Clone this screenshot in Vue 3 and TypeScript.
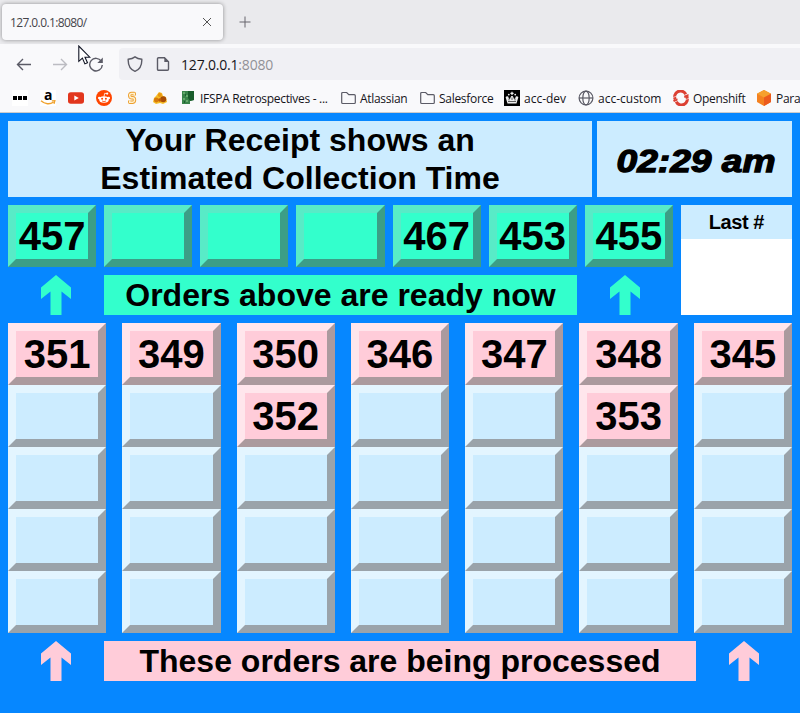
<script setup lang="ts">
interface Bookmark {
  icon: string
  label?: string
  loose?: boolean
}

const bookmarks: Bookmark[] = [
  { icon: 'dots' },
  { icon: 'amazon' },
  { icon: 'youtube' },
  { icon: 'reddit' },
  { icon: 'script' },
  { icon: 'cluster' },
  { icon: 'retro', label: 'IFSPA Retrospectives - ...' },
  { icon: 'folder', label: 'Atlassian' },
  { icon: 'folder', label: 'Salesforce' },
  { icon: 'crown', label: 'acc-dev', loose: true },
  { icon: 'globe', label: 'acc-custom', loose: true },
  { icon: 'openshift', label: 'Openshift' },
  { icon: 'cube', label: 'Para' },
]

const ready: string[] = ['457', '', '', '', '467', '453', '455']

const processing: string[][] = [
  ['351', '349', '350', '346', '347', '348', '345'],
  ['', '', '352', '', '', '353', ''],
  ['', '', '', '', '', '', ''],
  ['', '', '', '', '', '', ''],
  ['', '', '', '', '', '', ''],
]
</script>

<template>
  <div class="window">
    <header class="browser">
      <div class="tabs">
        <div class="tab">
          <span class="tab-title">127.0.0.1:8080/</span>
          <svg class="tab-close" viewBox="0 0 10 10"><path d="M1 1l8 8M9 1l-8 8" /></svg>
        </div>
        <svg class="new-tab" viewBox="0 0 12 12"><path d="M6 .5v11M.5 6h11" /></svg>
      </div>

      <div class="toolbar">
        <svg class="nav" viewBox="0 0 16 16"><path d="M15 8.500H1.500M7 3L1.500 8.500 7 14" /></svg>
        <svg class="nav disabled" viewBox="0 0 16 16"><path d="M1 8.500h13.500M9 3l5.500 5.500L9 14" /></svg>
        <svg class="nav" viewBox="0 0 16 16"><path d="M13.300 5.200A6.300 6.300 0 1 0 14.300 9" /><path d="M14.800 1.500v5.500H9.300z" class="solid" /></svg>
        <div class="address">
          <svg class="shield" viewBox="0 0 16 16"><path d="M8 .9C9.800 2.300 12 3 14.800 3.300 15 8.500 13 13.300 8 15.300 3 13.300 1 8.500 1.200 3.300 4 3 6.200 2.300 8 .9z" /></svg>
          <svg class="page" viewBox="0 0 14 16"><path d="M2.500 1.700h6l4 4v7.600a1 1 0 0 1-1 1h-9a1 1 0 0 1-1-1V2.700a1 1 0 0 1 1-1z" /><path d="M8.300 1.500v4.400h4.400z" class="solid" /></svg>
          <span class="url">127.0.0.1<span class="port">:8080</span></span>
        </div>
      </div>

      <nav class="bookmarks">
        <div v-for="(b, i) in bookmarks" :key="i" class="bookmark" :class="{ loose: b.loose }">
          <svg class="icon" viewBox="0 0 16 16">
            <template v-if="b.icon === 'dots'">
              <path fill="#fff" d="M0 0h16v16H0z" />
              <path fill="#000" d="M1 6h4v4H1zM6 6h4v4H6zM11 6h4v4h-4z" />
            </template>
            <template v-else-if="b.icon === 'amazon'">
              <path fill="#fff" d="M0 0h16v16H0z" />
              <text x="8" y="9.500" text-anchor="middle" class="logo-a">a</text>
              <path d="M1 10.800c4 3.600 9 3.700 12.300 1.400M11.800 10.900l3-.2-.8 3" fill="none" stroke="#f0a12b" stroke-width="1.400" />
            </template>
            <template v-else-if="b.icon === 'youtube'">
              <rect y="2.300" width="16" height="11.500" rx="2.800" fill="#e2361d" />
              <path d="M6.300 5.500v5l4.500-2.500z" fill="#fff" />
            </template>
            <template v-else-if="b.icon === 'reddit'">
              <circle cx="8" cy="8" r="8" fill="#ff4500" />
              <ellipse cx="8" cy="9.500" rx="4.800" ry="3.300" fill="#fff" />
              <circle cx="3.300" cy="8" r="1.300" fill="#fff" />
              <circle cx="12.700" cy="8" r="1.300" fill="#fff" />
              <circle cx="11.200" cy="3.600" r="1.100" fill="#fff" />
              <path d="M8 6.500l.7-3.200 2.500.4" fill="none" stroke="#fff" stroke-width=".8" />
              <circle cx="6.100" cy="8.800" r="1" fill="#ff4500" />
              <circle cx="9.900" cy="8.800" r="1" fill="#ff4500" />
              <path d="M6 11q2 1.200 4 0" fill="none" stroke="#ff4500" stroke-width=".8" />
            </template>
            <template v-else-if="b.icon === 'script'">
              <path d="M10.300 5.500V3.500H7.500Q5.700 3.500 5.700 5.500t1.800 2.300h1.200q1.800 0 1.800 2.100t-1.800 2.400H5.700V10.500" fill="none" stroke="#eda02f" stroke-width="3.400" stroke-linejoin="round" />
              <path d="M10.300 5.500V3.500H7.500Q5.700 3.500 5.700 5.500t1.800 2.300h1.200q1.800 0 1.800 2.100t-1.800 2.400H5.700V10.500" fill="none" stroke="#fff0cf" stroke-width="1.500" />
            </template>
            <template v-else-if="b.icon === 'cluster'">
              <path d="M4 6l3-4 3 1 1 3 3 1 1 5-4 2-3-1-4 1-3-2 1-4z" fill="#f6bd27" />
              <circle cx="7.800" cy="5" r="2" fill="#e9960f" />
              <circle cx="4.300" cy="10" r="2.400" fill="#d77a0b" />
              <circle cx="11.200" cy="9.300" r="3" fill="#a84c06" />
              <circle cx="7.800" cy="10" r="1.700" fill="#c45c08" />
            </template>
            <template v-else-if="b.icon === 'retro'">
              <path d="M2 1h12v9l-4 1v3H2z" fill="#39834a" />
              <path d="M8 1h6v9l-4 1-2-3z" fill="#195c2b" />
              <path d="M3 2h2v2H3zM6 5h2v2H6zM3 8h2v2H3zM6 10h2v2H6z" fill="#65a96b" />
              <path d="M5 4h1v2H5zM4 11h1v2H4z" fill="#1b602f" />
            </template>
            <path v-else-if="b.icon === 'folder'" d="M1.700 4.200v8.300q0 1 1 1h11.600q1 0 1-1V5.700q0-1-1-1H8.800L6.700 2.500h-4q-1 0-1 1z" class="line" />
            <template v-else-if="b.icon === 'crown'">
              <path fill="#000" d="M0 0h16v16H0z" />
              <path fill="#eee" d="M3.500 13.500L2 8.500Q1 6.500 3 6.200q2 .1 1.500 2L6 9l.6-1.800Q7 5.700 8 5.700t1.400 1.500L10 9l1.500-.8q-.5-1.900 1.500-2 2 .3 1 2.300l-1.500 5z" />
              <path fill="#eee" d="M7.400 1.800h1.200v1h1v1.200h-1V5H7.400V4h-1V2.800h1z" />
              <circle cx="4.800" cy="4.600" r=".9" fill="#eee" />
              <circle cx="11.200" cy="4.600" r=".9" fill="#eee" />
              <path d="M4 11.500h8M5 9v1.500M8 7.500v2.500M11 9v1.500" stroke="#222" stroke-width=".7" />
            </template>
            <g v-else-if="b.icon === 'globe'" class="line">
              <circle cx="8" cy="8" r="6.900" />
              <ellipse cx="8" cy="8" rx="3.200" ry="6.900" />
              <path d="M1 8h14" />
            </g>
            <template v-else-if="b.icon === 'openshift'">
              <g fill="none" stroke="#dc4033" stroke-width="3">
                <path d="M2.300 9.500A5.800 5.800 0 0 1 12.800 4.200" />
                <path d="M13.700 6.500A5.800 5.800 0 0 1 3.200 11.800" />
              </g>
              <path d="M0 10.300l4.500-1.700v2L1 12zM11 5.700L15.500 4v2.500L11.500 8z" fill="#dc4033" />
              <path d="M0 7.500l4.500-1.700M11.500 10L16 8.300" stroke="#f9f9fb" stroke-width=".6" />
            </template>
            <template v-else>
              <path d="M8 0l7 3.700v8.400L8 16l-7-3.900V3.700z" fill="#f48120" />
              <path d="M8 0l7 3.700-7 3.800-7-3.800z" fill="#f6a02d" />
              <path d="M15 3.700v8.400L8 16V7.500z" fill="#ec5a1d" />
            </template>
          </svg>
          <span v-if="b.label">{{ b.label }}</span>
        </div>
      </nav>
      <svg class="cursor" viewBox="0 0 13 20"><path d="M.8 1v15.300l3.600-3.200 2.500 5.800 2.600-1.100L7 12.200h4.800z" /></svg>
    </header>

    <main class="board">
      <section class="heading">
        <h1>Your Receipt shows an<br />Estimated Collection Time</h1>
        <div class="clock">
          <svg viewBox="0 0 195 76">
            <text x="19.500" y="50.500" textLength="159" lengthAdjust="spacingAndGlyphs">02:29 am</text>
          </svg>
        </div>
      </section>

      <section class="ready">
        <div v-for="(n, i) in ready" :key="i" class="cell green">{{ n }}</div>
        <svg class="arrow green-arrow first" viewBox="0 0 30 40"><path d="M15 0l15 12.500V24l-9.500-7.500V40h-11V16.500L0 24V12.500z" /></svg>
        <div class="caption ready-caption">Orders above are ready now</div>
        <svg class="arrow green-arrow second" viewBox="0 0 30 40"><path d="M15 0l15 12.500V24l-9.500-7.500V40h-11V16.500L0 24V12.500z" /></svg>
        <aside class="last"><div>Last #</div></aside>
      </section>

      <section class="processing">
        <template v-for="(row, r) in processing" :key="r">
          <div v-for="(n, c) in row" :key="c" class="cell" :class="n ? 'pink' : 'empty'">{{ n }}</div>
        </template>
      </section>

      <section class="footer">
        <svg class="arrow pink-arrow" viewBox="0 0 30 40"><path d="M15 0l15 12.500V24l-9.500-7.500V40h-11V16.500L0 24V12.500z" /></svg>
        <div class="caption pink-caption">These orders are being processed</div>
        <svg class="arrow pink-arrow" viewBox="0 0 30 40"><path d="M15 0l15 12.500V24l-9.500-7.500V40h-11V16.500L0 24V12.500z" /></svg>
      </section>
    </main>
  </div>
</template>

<style>
body {
  margin: 0;
  overflow: hidden;
}
</style>

<style scoped>
* {
  box-sizing: border-box;
}
.window {
  width: 800px;
  height: 713px;
  overflow: hidden;
  background: #0687ff;
  font-family: "Liberation Sans", Arial, sans-serif;
}
.browser {
  position: relative;
  height: 113px;
  background: #f9f9fb;
  border-bottom: 1px solid #ccc;
  font-family: "Open Sans", "Noto Sans", sans-serif;
  color: #15141a;
}
.tabs {
  display: flex;
  align-items: center;
  height: 44px;
  background: #eaeaed;
}
.tab {
  display: flex;
  align-items: center;
  justify-content: space-between;
  width: 221px;
  height: 36px;
  margin: 0 16px 0 2px;
  padding: 0 11px 0 8px;
  border-radius: 4px;
  background: #f9f9fb;
  box-shadow: 0 0 4px rgba(0, 0, 0, 0.4);
}
.tab-title {
  font-size: 12px;
  letter-spacing: -0.6px;
  color: #45444a;
}
svg {
  display: block;
  flex: none;
}
.tab-close {
  width: 10px;
  height: 10px;
  stroke: #555;
}
.new-tab {
  width: 12px;
  height: 12px;
  fill: none;
  stroke: #66656c;
}
.toolbar {
  display: flex;
  align-items: center;
  height: 40px;
  padding-left: 16px;
  gap: 20px;
}
.nav,
.shield,
.page {
  width: 16px;
  height: 16px;
  fill: none;
  stroke: #5b5b66;
  stroke-width: 1.4;
}
.disabled {
  stroke: #bcbcc2;
}
.solid {
  fill: #5b5b66;
  stroke: none;
}
.address {
  display: flex;
  align-items: center;
  flex: 1;
  height: 32px;
  margin-left: -5px;
  padding-left: 8px;
  border-radius: 4px 0 0 4px;
  background: #f0f0f4;
}
.page {
  width: 14px;
  margin-left: 13px;
}
.url {
  margin-left: 11px;
  font-size: 14px;
  letter-spacing: -0.19px;
}
.port {
  color: #929297;
}
.bookmarks {
  display: grid;
  grid-template-columns: repeat(6, 28px) 160px 79px 85px 74px 95px 83px 60px;
  align-items: center;
  height: 28px;
  padding-left: 12px;
}
.bookmark {
  display: flex;
  align-items: center;
  gap: 4px;
  white-space: nowrap;
  font-size: 12px;
  letter-spacing: -0.3px;
}
.loose {
  letter-spacing: 0;
}
.icon {
  width: 16px;
  height: 16px;
}
.line {
  fill: none;
  stroke: #5b5b66;
  stroke-width: 1.2;
}
.logo-a {
  font: bold 14px "Open Sans", sans-serif;
}
.cursor {
  position: absolute;
  left: 78px;
  top: 45px;
  width: 13px;
  height: 20px;
  fill: #fff;
  stroke: #111524;
  stroke-width: 1.1;
}
.board {
  display: flex;
  flex-direction: column;
  gap: 8px;
  padding: 8px;
  color: #000;
  font-weight: bold;
}
.heading {
  display: grid;
  grid-template-columns: 584px 195px;
  gap: 5px;
  height: 76px;
}
h1 {
  margin: 0;
  background: #ccecff;
  text-align: center;
  font-size: 32px;
  line-height: 38px;
}
.clock {
  background: #ccecff;
}
.clock text {
  font: italic bold 32px "Liberation Sans", Arial, sans-serif;
  stroke: #000;
  stroke-width: 1.3px;
}
.ready {
  display: grid;
  grid-template-columns: repeat(7, 88.14px) 111px;
  grid-template-rows: 62px 40px;
  gap: 8px;
}
.cell {
  height: 62px;
  border: 8px solid;
  font-size: 40px;
  line-height: 46px;
  display: flex;
  justify-content: center;
}
.green {
  background: #33ffcc;
  border-color: #58ebc7 #3c9e86 #3c9e86 #58ebc7;
}
.pink {
  background: #ffccd9;
  border-color: #ffe6ec #ab9a9e #ab9a9e #ffe6ec;
}
.empty {
  background: #ccecff;
  border-color: #e3f5ff #9aa3aa #9aa3aa #e3f5ff;
}
.last {
  grid-column: 8;
  grid-row: 1 / 3;
  background: #fff;
}
.last div {
  height: 34px;
  background: #ccecff;
  font-size: 20px;
  line-height: 34px;
  text-align: center;
  letter-spacing: -0.4px;
}
.arrow {
  width: 30px;
  height: 40px;
  justify-self: center;
}
.first {
  margin-left: 8px;
}
.second {
  margin-right: 8px;
}
.green-arrow {
  fill: #33ffcc;
}
.pink-arrow {
  fill: #ffccd9;
}
.caption {
  font-size: 32px;
  line-height: 40px;
  text-align: center;
  white-space: nowrap;
}
.ready-caption {
  grid-column: 2 / 7;
  background: #33ffcc;
}
.processing {
  display: grid;
  grid-template-columns: repeat(7, 1fr);
  column-gap: 16px;
}
.footer {
  display: grid;
  grid-template-columns: 96px 592px 96px;
}
.pink-caption {
  background: #ffccd9;
}
</style>
